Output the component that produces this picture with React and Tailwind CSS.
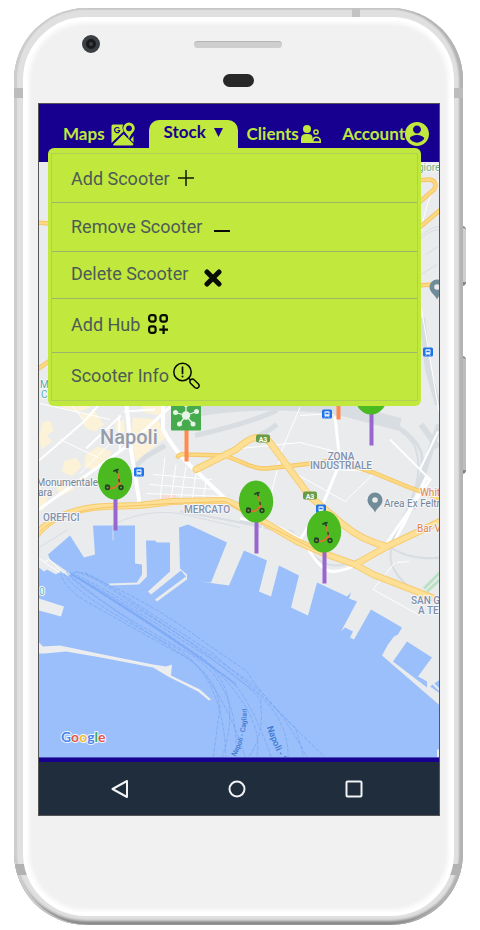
import React from "react";

const WATER =
  "M39 568 L44 572 L47 570 L56 575 L60 572 L69 577 L70 574 L50 560 L48 555 L70 536 L84 558 L95 555 L93 526 L135 526 L135 564 L142 565 L142 575 L137 583 L109 584 L109 586 L139 585 L147 577 L146 541 L155 541 L157 543 L170 543 L170 572 L148 592 L151 595 L181 571 L186 577 L155 600 L157 602 L187 580 L187 575 L180 569 L179 528 L188 525 L195 528 L227 543 L211 583 L200 582 L229 586 L244 551 L267 561 L259 592 L271 597 L279 566 L299 576 L291 608 L308 616 L317 583 L347 597 L351 593 L349 599 L357 602 L341 632 L345 628 L353 632 L350 638 L354 640 L371 610 L402 628 L398 635 L394 637 L388 645 L382 656 L440 706 L440 758 L39 758 Z";

const MAIN_ROADS = [
  "M36 536 Q48 521 63 516 Q81 508 105 507 L138 506 Q150 505 171 502 L225 501 Q232 503 240 508 L263 522 L297 542 L327 555 L355 565 L373 575 L442 602",
  "M196 470 L236 450 Q250 438 257 438 Q266 438 270 443 L290 470 L310 497 L343 525 Q362 541 387 547",
  "M355 565 L387 547 L442 521",
];

const SIDE_ROADS = [
  "M178 457 Q180 454 186 455 L225 456 L240 462 Q256 470 267 469 L320 463 Q335 459 343 463 L373 473 L407 487 L442 500",
  "M225 456 L242 446",
  "M416 181 L430 180 Q438 182 434 190 L418 204",
  "M416 231 L442 209",
  "M416 286 L434 285",
  "M36 223 L50 224",
  "M36 371 L50 361",
];

const WHITE_ROADS = [
  ["M36 512 L128 446 L176 402", 3],
  ["M126 400 L131 450 L140 506", 4],
  ["M163 398 L163 430 Q172 447 186 462 L226 500", 4],
  ["M39 461 L84 422 L100 404", 2],
  ["M335 417 L340 463 L322 507 L300 540", 3],
  ["M300 408 L282 450 L270 500 L262 530", 1],
  ["M240 519 Q290 525 308 549 Q322 573 334 572 Q358 570 386 545 L430 480 L426 478 L404 524 L392 546", 3],
  ["M119 416 L120 453 M124 412 L155 410 M86 449 L121 416", 2],
  ["M240 449 L300 443 L335 452 M300 416 L332 414", 1],
  ["M290 471 L345 502 L376 472 L327 470", 1],
  ["M395 563 L373 590 L420 616 M397 563 L409 562", 1],
  ["M439 180 Q426 200 421 232 M421 307 L439 412", 1],
  ["M153 475 L212 480 M150 485 L216 490 M165 458 L160 500 M176 465 L171 499 M186 467 L181 499 M196 474 L192 500 M206 482 L203 500 M147 494 L226 497", 1],
  ["M40 404 L110 420 M67 400 L84 421 M60 440 L98 458 M80 474 L112 442", 1],
  ["M420 470 L438 432 M390 440 L430 480", 2],
];

const FERRIES = [
  "M60 572 Q64 590 90 604 L175 652 Q216 672 220 708 L213 760",
  "M64 574 Q78 598 175 648 Q224 676 226 760",
  "M68 575 Q90 598 180 649 Q240 678 236 760",
  "M69 572 Q130 612 200 658 Q245 690 222 758",
  "M70 574 Q140 617 205 660 Q268 718 256 760",
  "M72 573 Q145 610 240 676 Q278 700 308 760",
  "M74 573 Q84 571 102 582 L210 652 L262 696 L325 758",
  "M76 572 Q140 595 205 643 L247 672 Q258 692 295 728 Q300 742 304 760",
  "M66 572 Q104 607 190 660 Q224 690 246 760",
  "M71 575 Q150 624 218 672 Q246 684 272 760",
  "M78 578 Q130 606 190 646 Q240 676 260 700 Q266 735 247 760",
  "M85 573 Q190 640 238 680 Q290 712 288 760",
];

function Label({ x, y, color = "#8090ad", size = 10, weight = 500, anchor = "start", children }) {
  return (
    <text x={x} y={y} fill={color} fontSize={size} fontWeight={weight} textAnchor={anchor} stroke="#f5f6f8" strokeWidth="2" paintOrder="stroke" strokeLinejoin="round">
      {children}
    </text>
  );
}

function Station({ x, y }) {
  return (
    <g transform={`translate(${x} ${y})`}>
      <rect x="-5" y="-5" width="10" height="9" rx="1.5" fill="#1f75e8" />
      <rect x="-2.5" y="-3.2" width="5" height="5.2" rx="1" fill="#e8f1fd" />
      <path d="M-1.6 -1.8H1.6V-.3H-1.6Z" fill="#1f75e8" />
      <path d="M-1.5 2 L-2.5 3.3 M1.5 2 L2.5 3.3" stroke="#e8f1fd" strokeWidth=".7" />
    </g>
  );
}

function Shield({ x, y }) {
  return (
    <g>
      <rect x={x - 7} y={y - 4} width="14" height="8" rx="2" fill="#699b45" />
      <text x={x} y={y + 3} fill="#fff" fontSize="7" fontWeight="700" textAnchor="middle">A3</text>
    </g>
  );
}

function Place({ x, y }) {
  return (
    <g transform={`translate(${x} ${y})`}>
      <path d="M0 11 C-2 6 -7.5 4 -7.5 -1.5 A7.5 7.5 0 0 1 7.5 -1.5 C7.5 4 2 6 0 11Z" fill="#708c98" />
      <circle cy="-1.5" r="2.8" fill="#e9ebed" />
    </g>
  );
}

function ScooterMarker({ x, y }) {
  return (
    <g transform={`translate(${x} ${y})`}>
      <path d="M.5 18V52" stroke="#9965cf" strokeWidth="4" />
      <ellipse rx="17.2" ry="21" fill="#4aba20" />
      <g fill="none" strokeLinecap="round" strokeLinejoin="round">
        <path d="M2.500 -6 L5 7.500 M5 4 L0 9 Q-3 10.500 -7 9.500" stroke="#ea6c35" strokeWidth="1.600" />
        <path d="M-1 -7.500 L1 -8.500 L3 -8.800 M1.300 -8.500 L2.200 -6" stroke="#27402b" strokeWidth="1.700" />
        <path d="M4 1 L4.200 3" stroke="#27402b" strokeWidth="1.400" />
        <circle cx="-7.500" cy="9" r="1.900" stroke="#27402b" strokeWidth="1.600" />
        <circle cx="6" cy="9" r="1.900" stroke="#27402b" strokeWidth="1.600" />
        <path d="M-9.500 6.500 Q-8 5.500 -5.500 7" stroke="#27402b" strokeWidth="1" />
      </g>
    </g>
  );
}

function HubMarker({ x, y }) {
  const nodes = [[0, -11], [10.5, -4], [7, 8.5], [-6.5, 8.5], [-10.5, -3]];
  return (
    <g transform={`translate(${x} ${y})`}>
      <path d="M.5 14V46" stroke="#ff8a50" strokeWidth="4" />
      <rect x="-15" y="-16" width="30" height="31" rx="1" fill="#46ab4c" />
      {nodes.map(([cx, cy]) => (
        <g key={cx}>
          <path d={`M0 0 L${cx} ${cy}`} stroke="#e6f5e6" strokeWidth="1.3" />
          <circle cx={cx} cy={cy} r="2.5" fill="#e6f5e6" />
        </g>
      ))}
      <circle r="4.2" fill="#e6f5e6" />
    </g>
  );
}

function CityMap() {
  return (
    <svg className="block h-full w-full font-[Roboto,sans-serif]" viewBox="39 162 400 596" preserveAspectRatio="xMidYMid slice" role="img" aria-label="Napoli">
      <rect x="0" y="100" width="480" height="700" fill="#e9ebed" />

      <g fill="#fbf2d8">
        <path d="M42 423 L50 421 L54 431 L47 436 L52 442 L42 450 L39 440Z M58 400 H84 L90 408 L78 413 L62 408Z M80 415 L95 412 L104 425 L95 432 L85 428Z" />
        <path d="M86 455 L98 447 L112 452 L105 464 L94 472 L84 466Z M64 462 L76 458 L82 467 L72 477 L62 472Z M133 418 L158 420 L166 438 L148 452 L136 462 L131 440Z M140 402 L162 401 L161 416 L144 413Z M115 423 L124 420 L125 433 L116 432Z M104 472 L112 462 L124 460 L126 468 Z" />
        <path d="M39 486 L48 496 L44 510 L39 511Z M56 487 L70 482 L74 490 L60 497Z" />
      </g>
      <path d="M160 495 L175 494 L177 499 L158 500Z" fill="#f7dcd9" />

      <g fill="none" stroke="#d8dde2">
        <path d="M200 410 Q260 400 335 408 L400 425" strokeWidth="13" />
        <path d="M195 436 Q245 425 277 411 M240 445 Q264 435 277 425 M135 467 L146 457 L165 446" strokeWidth="5" />
        <path d="M335 415 Q395 416 414 445 Q427 475 402 520 Q388 545 391 562 Q395 580 424 598" strokeWidth="2" />
        <path d="M350 412 Q408 421 421 452 Q426 474 414 510" strokeWidth="3" />
        <path d="M422 318 L428 370 L438 405 M421 425 L438 448 M439 425 L418 490" strokeWidth="6" />
        <path d="M240 521 L292 532 Q318 566 334 566 Q352 567 386 545 Q410 562 440 558 M180 512 Q240 522 280 532" strokeWidth="2" />
        <path d="M420 237 Q430 227 440 227 M420 240 Q430 230 440 230 M426 255 L438 247 M421 275 L437 265" strokeWidth="1" />
        <path d="M95 538 Q130 508 180 514 L240 528 M39 548 L68 530" strokeWidth="1" />
      </g>

      <g fill="none" stroke="#fff" strokeLinejoin="round">
        {WHITE_ROADS.map(([d, w]) => <path key={d} d={d} strokeWidth={w} />)}
      </g>

      <g fill="none" strokeLinecap="round" strokeLinejoin="round">
        <g stroke="#f6c566">{SIDE_ROADS.map((d) => <path key={d} d={d} strokeWidth="4.5" />)}</g>
        <g stroke="#f7cb70">{MAIN_ROADS.map((d) => <path key={d} d={d} strokeWidth="7" />)}</g>
        <g stroke="#fcd981">{SIDE_ROADS.map((d) => <path key={d} d={d} strokeWidth="2.5" />)}</g>
        <g stroke="#fde095">{MAIN_ROADS.map((d) => <path key={d} d={d} strokeWidth="5" />)}</g>
        <path d="M40 532 Q58 513 105 508 L171 504 L225 502 L263 524 L327 556" stroke="#f6c566" strokeWidth="1" />
      </g>
      <path d="M424 589 L440 573 M427 592 L440 580" stroke="#b9e2c4" strokeWidth="3" />

      <path d={WATER} fill="#9bbffa" />
      <path d="M407 642 L432 658 L418 677 L422 679 L427 682 L427 688 L393 662Z M430 687 L440 680 V694Z" fill="#9bbffa" />
      <path d="M433 684 L440 691" stroke="#e9ebed" strokeWidth="2" />
      <path d="M39 599 L64 607 L61 617 L39 611Z M39 643 L43 647 L60 646 L98 654 L153 665 L166 667 L172 665 L171 676 L200 690 L211 700 L209 701 L198 692 L168 677 L153 668 L101 658 L66 652 L45 654 L39 654Z M437 750H440V758H437Z" fill="#ebedee" />
      <path d="M39 559 L61 574 M44 563 L49 560 L61 571" stroke="#fff" strokeWidth="1" fill="none" />
      <path d="M113 526 V541" stroke="#d5dcec" strokeWidth="1" />

      <g fill="none" stroke="#79a7f3" strokeWidth=".8" strokeDasharray="4 1.5">
        {FERRIES.map((d) => <path key={d} d={d} />)}
      </g>
      <path d="M72 575 Q150 620 236 685" fill="none" stroke="#78a7f6" strokeWidth="2" opacity=".6" />

      <Station x={139} y={473} />
      <Station x={327} y={415} />
      <Station x={321} y={510} />
      <Station x={428} y={353} />
      <Shield x={263} y={439} />
      <Shield x={310} y={496} />
      <Place x={375} y={502} />
      <Place x={437} y={289} />

      <Label x={100} y={444} size={20} color="#959ba8">Napoli</Label>
      <Label x={98} y={486} weight={400} anchor="end" color="#738395">Monumentale</Label>
      <Label x={38} y={496} weight={400} color="#738395">ara</Label>
      <Label x={43} y={521}>OREFICI</Label>
      <Label x={184} y={513}>MERCATO</Label>
      <Label x={341} y={460} anchor="middle">ZONA</Label>
      <Label x={341} y={469} anchor="middle">INDUSTRIALE</Label>
      <Label x={411} y={604}>SAN G</Label>
      <Label x={418} y={614}>A TE</Label>
      <Label x={384} y={507} weight={400} color="#738395">Area Ex Feltr</Label>
      <Label x={420} y={496} color="#e28241" weight={400}>Whit</Label>
      <Label x={417} y={532} color="#e28241" weight={400}>Bar V</Label>
      <Label x={418} y={171} color="#6eb185" weight={400}>giore</Label>
      <Label x={40} y={388} color="#58aab5" weight={400}>M</Label>
      <Label x={41} y={398} color="#58aab5" weight={400}>C</Label>
      <Label x={39} y={595} color="#72b4c4" weight={400}>0</Label>

      <path id="ferry-cagliari" d="M235 757 Q250 736 246 690" fill="none" />
      <path id="ferry-palermo" d="M267 728 Q272 745 294 786" fill="none" />
      <g fontWeight="500" fill="#3f78cf">
        <text fontSize="7"><textPath href="#ferry-cagliari">Napoli - Cagliari</textPath></text>
        <text fontSize="9"><textPath href="#ferry-palermo">Napoli - P</textPath></text>
      </g>

      <HubMarker x={186} y={416} />
      <path d="M338.5 400V420" stroke="#ff8a50" strokeWidth="4" />
      <ScooterMarker x={371} y={394} />
      <ScooterMarker x={115} y={479} />
      <ScooterMarker x={256} y={502} />
      <ScooterMarker x={324} y={532} />

      <text x="61" y="742" className="font-[Lato,sans-serif]" fontSize="14" fontWeight="700" stroke="#f0f5ff" strokeWidth="2" paintOrder="stroke" strokeLinejoin="round">
        <tspan fill="#4c84ee">G</tspan>
        <tspan fill="#e25549">o</tspan>
        <tspan fill="#f2bd2d">o</tspan>
        <tspan fill="#4c84ee">g</tspan>
        <tspan fill="#3fa55c">l</tspan>
        <tspan fill="#e25549">e</tspan>
      </text>
    </svg>
  );
}

function MapsIcon() {
  return (
    <svg className="h-6 w-6" viewBox="0 0 24 24" fill="currentColor" aria-hidden="true">
      <path d="M.500 4 Q.500 2.500 2 2.500 H12 Q10.500 6 12.500 9.500 L.500 21Z" />
      <path d="M12.500 12 L22.500 22 Q22 23.500 21 23.500 H3.500 Q2 23.500 2 22Z" />
      <path d="M18 .500 A5.800 5.800 0 0 1 23.800 6.300 C23.800 10 19.500 12 18 17 C16.500 12 12.200 10 12.200 6.300 A5.800 5.800 0 0 1 18 .500Z" />
      <path d="M22.500 14 V20.500 L19.500 17.500Z" />
      <circle cx="18" cy="6.300" r="2.900" fill="#170090" />
      <path d="M8.300 6.500 A2.600 2.600 0 1 0 8.800 8.500 H6.500" fill="none" stroke="#170090" strokeWidth="1.200" />
      <path d="M1 22.500 L12.500 11 L17 15" fill="none" stroke="#170090" strokeWidth="1.200" />
    </svg>
  );
}

function ClientsIcon() {
  return (
    <svg className="h-[18px] w-5" viewBox="0 0 20 18" fill="currentColor" aria-hidden="true">
      <circle cx="6" cy="4" r="4" />
      <path d="M0 18 V14 Q0 9 5 9 H7 Q11 9 11.500 12 L11 18Z" />
      <circle cx="15" cy="7" r="2.100" fill="none" stroke="currentColor" strokeWidth="1.500" />
      <path d="M10.500 18 V15.500 Q12 11.500 15 11.500 Q20 11.500 20 16 V18Z" />
      <path d="M12.500 16.200 Q13 13 15.300 13 Q18.500 13 18.500 16.200Z" fill="#170090" />
    </svg>
  );
}

function AccountIcon() {
  return (
    <svg className="h-6 w-6" viewBox="2 2 20 20" fill="currentColor" aria-hidden="true">
      <path d="M12 2C6.480 2 2 6.480 2 12s4.480 10 10 10 10-4.480 10-10S17.520 2 12 2zm0 3c1.840 0 3.330 1.500 3.330 3.330S13.840 11.670 12 11.670 8.670 10.170 8.670 8.330 10.160 5 12 5zm0 14.200c-2.500 0-4.710-1.280-6-3.220.03-1.990 4-3.080 6-3.080 1.990 0 5.970 1.090 6 3.080-1.290 1.940-3.500 3.220-6 3.220z" />
    </svg>
  );
}

const MENU = [
  {
    label: "Add Scooter",
    row: "h-12 gap-2",
    icon: <svg className="h-4 w-4" viewBox="0 0 16 16" stroke="#10180a" strokeWidth="1.5" aria-hidden="true"><path d="M8 0V16M0 8H16" /></svg>,
  },
  {
    label: "Remove Scooter",
    row: "h-12 gap-3 pb-[2px]",
    icon: <svg className="h-4 w-4" viewBox="0 0 16 16" stroke="#080c02" strokeWidth="2" aria-hidden="true"><path d="M0 13H16" /></svg>,
  },
  {
    label: "Delete Scooter",
    row: "h-[46px] gap-4 pb-[3px]",
    icon: <svg className="mt-2 h-[18px] w-[18px]" viewBox="0 0 18 18" stroke="#080c02" strokeWidth="5" strokeLinecap="round" aria-hidden="true"><path d="M3 3L15 15M15 3L3 15" /></svg>,
  },
  {
    label: "Add Hub",
    row: "h-[53px] gap-2 pb-[3px]",
    icon: (
      <svg className="h-5 w-5" viewBox="0 0 20 20" fill="none" stroke="#080c02" strokeWidth="2.2" aria-hidden="true">
        <rect x="1.1" y="1.1" width="6.5" height="6.5" rx="2.3" />
        <rect x="12.4" y="1.1" width="6.5" height="6.5" rx="2.3" />
        <rect x="1.1" y="12.4" width="6.5" height="6.5" rx="2.3" />
        <path d="M15.6 11.3V20M11.3 15.6H20" />
      </svg>
    ),
  },
  {
    label: "Scooter Info",
    row: "h-[47px] gap-1 pb-[3px]",
    icon: (
      <svg className="h-[27px] w-[27px]" viewBox="0 0 27 27" fill="none" stroke="#080c02" strokeWidth="1.5" strokeLinecap="round" strokeLinejoin="round" aria-hidden="true">
        <circle cx="9.5" cy="10" r="8.7" />
        <path d="M9.5 5V11.5" strokeWidth="1.7" />
        <path d="M9.5 14.5V14.6" strokeWidth="2" />
        <path d="M15.5 16L17.5 18M17.6 17.8Q19.5 16 21.3 18L25.5 22Q27 24 25.3 25.5Q23.7 27 21.8 25.5L17.5 21.3Q16.2 19.5 17.6 17.8Z" />
      </svg>
    ),
  },
];

function Header() {
  return (
    <header className="relative z-10 h-[58px] bg-[#170090] pt-4 font-[Lato,sans-serif] text-[17px] font-bold text-[#c0e83d]">
      <nav className="flex h-7 items-center pl-6 pr-[10px] leading-6">
        <a href="#maps" className="flex items-center gap-[6px]">Maps<MapsIcon /></a>
        <button type="button" aria-expanded="true" aria-controls="stock-menu" className="ml-[14px] flex h-7 w-[89px] items-center justify-center gap-2 rounded-t-[10px] bg-[#c0e83d] pb-1 text-[#170090]">
          Stock
          <svg className="h-[9px] w-[9px]" viewBox="0 0 9 9" fill="currentColor" aria-hidden="true"><path d="M0 0H9L4.5 9Z" /></svg>
        </button>
        <a href="#clients" className="ml-[9px] flex items-center gap-[2px]">Clients<ClientsIcon /></a>
        <a href="#account" className="ml-auto flex items-center">Account<AccountIcon /></a>
      </nav>
      <div id="stock-menu" className="absolute left-[9px] right-[18px] top-11 rounded-[6px] bg-[#c0e83d] px-[3px] py-[5px]">
        <ul className="divide-y divide-[#9fb36a] border border-[#b0cf55] font-[Roboto,sans-serif] text-[18px] font-normal text-[#4d5b57]">
          {MENU.map(({ label, row, icon }) => (
            <li key={label}>
              <button type="button" className={`flex w-full items-center pl-[19px] text-left ${row}`}>
                {label}
                {icon}
              </button>
            </li>
          ))}
        </ul>
      </div>
    </header>
  );
}

function SystemBar() {
  const icon = "h-[18px] w-[18px]";
  return (
    <div className="flex h-[53px] items-center justify-between bg-[#1f2d3d] pl-[72px] pr-[76px]">
      <button type="button" aria-label="Back">
        <svg className={icon} viewBox="0 0 18 18" fill="none" stroke="#f1f3f5" strokeWidth="2" strokeLinejoin="round"><path d="M1.5 9L16 1V17Z" /></svg>
      </button>
      <button type="button" aria-label="Home">
        <svg className={icon} viewBox="0 0 18 18" fill="none" stroke="#f1f3f5" strokeWidth="2"><circle cx="9" cy="9" r="7.5" /></svg>
      </button>
      <button type="button" aria-label="Recent apps">
        <svg className={icon} viewBox="0 0 18 18" fill="none" stroke="#f1f3f5" strokeWidth="2"><rect x="1.5" y="1.5" width="15" height="15" rx="1" /></svg>
      </button>
    </div>
  );
}

export default function App() {
  return (
    <div className="min-h-screen bg-white pb-[5px] pl-[14px] pr-[17px] pt-2">
      <div className="relative">
        <span className="absolute -right-[3px] top-[218px] h-[60px] w-1 rounded-r-sm border-b-4 border-t-2 border-[#858585] bg-[#cfcfcf]" />
        <span className="absolute -right-[3px] top-[348px] h-[118px] w-1 rounded-r-sm border-b-4 border-t-2 border-[#858585] bg-[#bdbdbd]" />

        <div className="relative overflow-hidden rounded-[72px] bg-[#e0e0e0] p-[9px] shadow-[inset_3px_0_1px_#cdcdcd,inset_-4px_0_2px_#b3b3b3,inset_0_-4px_3px_#858585,inset_0_2px_1px_#cecece]">
          <span className="absolute right-[103px] top-0 h-[9px] w-2 bg-[#c3c3c3]" />
          <span className="absolute inset-x-0 top-20 h-[10px] bg-[#bcbcbc]" />
          <span className="absolute inset-x-0 bottom-[50px] h-[11px] bg-[#b2b2b2]" />

          <main className="relative rounded-[63px] border-4 border-white bg-[#f1f1f1] pl-[11px] pr-[10px] shadow-[inset_0_0_4px_2px_#ffffff]">
            <div className="flex h-[82px] flex-col items-center pr-[2px] pt-[14px]">
              <div className="grid w-full grid-cols-[1fr_88px_1fr] items-center">
                <span className="ml-11 flex h-[18px] w-[18px] items-center justify-center rounded-full border-4 border-[#3b3e42] bg-[#17191c]">
                  <span className="h-1 w-1 rounded-full bg-[#3d4038]" />
                </span>
                <span className="h-[7px] rounded-full border-t border-[#b5b5b5] bg-[#cecece]" />
              </div>
              <span className="mt-[21px] h-[13px] w-[31px] rounded-full bg-[#282828]" />
            </div>

            <div className="border border-[#555] bg-[#170090]">
              <Header />
              <section className="h-[596px] border-b border-[#4d55bd]" aria-label="Map">
                <CityMap />
              </section>
              <div className="h-1" />
              <SystemBar />
            </div>
            <div className="h-24" />
          </main>
        </div>
      </div>
    </div>
  );
}
